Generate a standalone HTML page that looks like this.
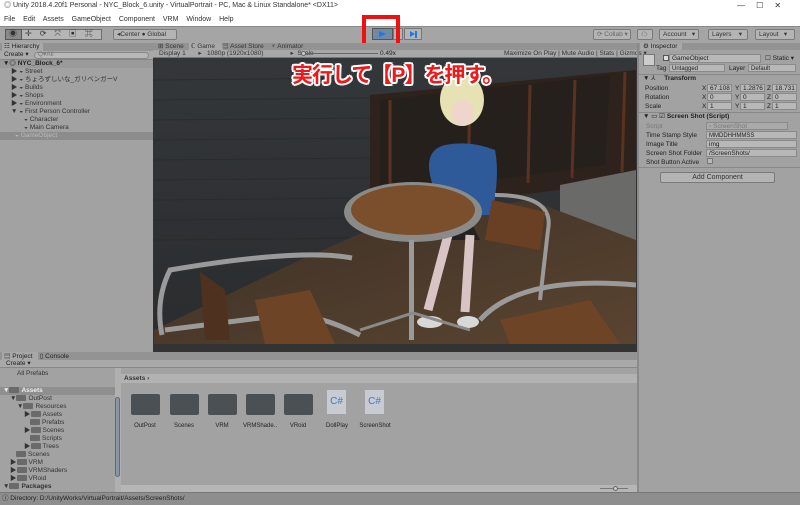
<!DOCTYPE html>
<html><head><meta charset="utf-8"><style>
*{margin:0;padding:0;box-sizing:border-box}
body{width:800px;height:505px;overflow:hidden;background:#a2a2a2;font-family:"Liberation Sans","Noto Sans CJK JP",sans-serif;font-size:7px;color:#222;position:relative}
.a{position:absolute}
.btn{position:absolute;background:#b4b4b4;border:1px solid #7a7a7a;border-radius:2px;font-size:6.5px;line-height:9px;padding-left:3px;color:#333}
.fld{position:absolute;background:#b8b8b8;border:1px solid #8a8a8a;font-size:6.5px;line-height:8px;padding-left:2px;color:#222}
.t{position:absolute;font-size:6.5px;line-height:8px;white-space:nowrap}
.fold{display:inline-block;width:10px;height:6px;background:#6a6a6a;border-radius:1px;vertical-align:middle;margin-right:2px}
.r{position:absolute;font-size:6.5px;line-height:8px;height:8px;white-space:nowrap;color:#333}
</style></head><body>
<div class="a" style="left:0;top:0;width:800px;height:26px;background:#fff"></div>
<div class="t" style="left:4px;top:2px;font-size:7px;color:#333">◎ Unity 2018.4.20f1 Personal - NYC_Block_6.unity - VirtualPortrait - PC, Mac &amp; Linux Standalone* &lt;DX11&gt;</div>
<div class="t" style="left:737px;top:2px;font-size:8px;color:#333">—&nbsp;&nbsp;&nbsp;&nbsp;&nbsp;☐&nbsp;&nbsp;&nbsp;&nbsp;&nbsp;✕</div>
<div class="t" style="left:4px;top:16px;font-size:7px;color:#333;word-spacing:2px">File&nbsp; Edit&nbsp; Assets&nbsp; GameObject&nbsp; Component&nbsp; VRM&nbsp; Window&nbsp; Help</div>
<div class="a" style="left:0;top:26px;width:800px;height:17px;background:#a5a5a5;border-top:1px solid #888"></div>
<div class="a" style="left:5px;top:29px;width:97px;height:11px;background:#b6b6b6;border:1px solid #6e6e6e"></div>
<div class="a" style="left:5px;top:29px;width:17px;height:11px;background:#8a8a8a;border:1px solid #555"></div>
<div class="t" style="left:9px;top:30px;font-size:8px;letter-spacing:8px;color:#333">◉✛⟳⤧▣⌘</div>
<div class="btn" style="left:113px;top:29px;width:64px;height:11px">◂Center ● Global</div>
<div class="a" style="left:372px;top:28px;width:21px;height:12px;background:#6f8aa6;border:1px solid #555"></div>
<div class="a" style="left:379px;top:31px;width:0;height:0;border-left:7px solid #1e78e8;border-top:3.5px solid transparent;border-bottom:3.5px solid transparent"></div>
<div class="a" style="left:393px;top:28px;width:10px;height:12px;background:#b4b4b4;border:1px solid #777"></div>
<div class="a" style="left:404px;top:28px;width:18px;height:12px;background:#b4b4b4;border:1px solid #777"></div>
<div class="a" style="left:410px;top:31px;width:0;height:0;border-left:5px solid #1e78e8;border-top:3.5px solid transparent;border-bottom:3.5px solid transparent"></div>
<div class="a" style="left:415px;top:31px;width:2px;height:7px;background:#1e78e8"></div>
<div class="a" style="left:362px;top:15px;width:38px;height:33px;border:4px solid #f01010"></div>
<div class="btn" style="left:593px;top:29px;width:38px;height:11px;color:#666">⟳ Collab ▾</div>
<div class="btn" style="left:637px;top:29px;width:16px;height:11px">☁</div>
<div class="btn" style="left:659px;top:29px;width:40px;height:11px">Account&nbsp;&nbsp;&nbsp;▾</div>
<div class="btn" style="left:708px;top:29px;width:40px;height:11px">Layers&nbsp;&nbsp;&nbsp;&nbsp;▾</div>
<div class="btn" style="left:755px;top:29px;width:40px;height:11px">Layout&nbsp;&nbsp;&nbsp;▾</div>
<!-- hierarchy -->
<div class="a" style="left:0;top:43px;width:153px;height:8px;background:#939393"></div>
<div class="a" style="left:2px;top:43px;width:41px;height:8px;background:#a8a8a8;border-radius:2px 2px 0 0"></div>
<div class="t" style="left:4px;top:43px">☷ Hierarchy</div>
<div class="a" style="left:0;top:51px;width:153px;height:9px;background:#a9a9a9;border-bottom:1px solid #888"></div>
<div class="t" style="left:4px;top:51px">Create ▾</div>
<div class="a" style="left:34px;top:52px;width:115px;height:7px;background:#b8b8b8;border:1px solid #888;border-radius:4px"></div>
<div class="t" style="left:38px;top:51px;color:#777">Q▾All</div>
<div class="a" style="left:0;top:60px;width:153px;height:292px;background:#a2a2a2"></div>
<div class="a" style="left:0;top:60px;width:153px;height:8px;background:#9a9a9a"></div>
<div class="t" style="left:3px;top:60px;font-weight:bold">▼◎ NYC_Block_6*</div>
<div class="t" style="left:11px;top:68px;color:#333;line-height:8px">▶ ◒ Street<br>▶ ◒ ちょろずしいな_ガリベンガーV<br>▶ ◒ Builds<br>▶ ◒ Shops<br>▶ ◒ Environment<br>▼ ◒ First Person Controller</div>
<div class="t" style="left:24px;top:116px;color:#333;line-height:8px">◒ Character<br>◒ Main Camera</div>
<div class="a" style="left:0;top:132px;width:153px;height:8px;background:#8c8c8c"></div>
<div class="t" style="left:15px;top:132px;color:#bbb">◒ GameObject</div>
<!-- game view -->
<div class="a" style="left:153px;top:43px;width:484px;height:309px;background:#333"></div>
<div class="a" style="left:153px;top:43px;width:484px;height:7px;background:#939393"></div>
<div class="a" style="left:189px;top:43px;width:34px;height:7px;background:#a8a8a8"></div>
<div class="t" style="left:158px;top:43px;line-height:7px;color:#333">⊞ Scene&nbsp;&nbsp;&nbsp;&nbsp;ℂ Game&nbsp;&nbsp;&nbsp;&nbsp;▤ Asset Store&nbsp;&nbsp;&nbsp;&nbsp;♆ Animator</div>
<div class="a" style="left:153px;top:50px;width:484px;height:8px;background:#a8a8a8;border-bottom:1px solid #777"></div>
<div class="t" style="left:159px;top:50px;color:#333">Display 1&nbsp;&nbsp;&nbsp;&nbsp;&nbsp;&nbsp;&nbsp;▸&nbsp;&nbsp;&nbsp;1080p (1920x1080)&nbsp;&nbsp;&nbsp;&nbsp;&nbsp;&nbsp;&nbsp;&nbsp;&nbsp;&nbsp;&nbsp;&nbsp;&nbsp;&nbsp;&nbsp;▸&nbsp; Scale</div>
<div class="a" style="left:303px;top:53px;width:75px;height:1px;background:#666"></div>
<div class="a" style="left:301px;top:51px;width:5px;height:5px;border-radius:50%;background:#ccc;border:1px solid #666"></div>
<div class="t" style="left:380px;top:50px">0.49x</div>
<div class="t" style="left:504px;top:50px;color:#333">Maximize On Play | Mute Audio | Stats | Gizmos ▾</div>
<svg class="a" style="left:154px;top:58px" width="482" height="286" viewBox="154 58 482 286">
<defs><linearGradient id="w" x1="0" y1="0" x2="0" y2="1"><stop offset="0" stop-color="#34373a"/><stop offset="1" stop-color="#2a2c2e"/></linearGradient>
<linearGradient id="fl" x1="0" y1="0" x2="1" y2="1"><stop offset="0" stop-color="#3c3026"/><stop offset="1" stop-color="#5a4430"/></linearGradient></defs>
<rect x="154" y="58" width="482" height="286" fill="url(#w)"/>
<g stroke="#27292b" stroke-width="1" opacity=".7">
<line x1="154" y1="80" x2="370" y2="78"/><line x1="154" y1="100" x2="370" y2="98"/><line x1="154" y1="120" x2="370" y2="118"/><line x1="154" y1="140" x2="370" y2="138"/><line x1="154" y1="160" x2="370" y2="158"/><line x1="154" y1="180" x2="370" y2="178"/><line x1="154" y1="200" x2="370" y2="198"/><line x1="154" y1="220" x2="370" y2="218"/><line x1="154" y1="240" x2="370" y2="238"/></g>
<polygon points="370,95 636,70 636,180 520,195 370,210" fill="#2e221c"/>
<polygon points="380,100 610,75 605,165 380,195" fill="#26201d"/>
<g stroke="#5a3220" stroke-width="3"><line x1="390" y1="100" x2="390" y2="200"/><line x1="470" y1="92" x2="468" y2="190"/><line x1="530" y1="85" x2="528" y2="183"/><line x1="575" y1="80" x2="572" y2="178"/><line x1="625" y1="72" x2="622" y2="172"/></g>
<polygon points="560,185 636,170 636,255 560,230" fill="#6a6a68"/>
<polygon points="154,330 300,260 380,225 530,200 636,240 636,344 154,344" fill="url(#fl)"/>
<!-- character -->
<path d="M430 175 Q425 150 445 145 Q470 140 495 150 Q500 175 492 215 L440 215 Z" fill="#2f5a9a"/>
<path d="M445 215 L470 220 L480 240 L445 240 Z" fill="#222"/>
<path d="M448 235 L428 310 M470 235 L465 312" stroke="#d8c4c4" stroke-width="9"/>
<ellipse cx="462" cy="100" rx="22" ry="26" fill="#e6e2b4"/>
<ellipse cx="463" cy="113" rx="11" ry="13" fill="#efd6cc"/>
<ellipse cx="430" cy="322" rx="13" ry="6" fill="#d8d8d8"/>
<ellipse cx="468" cy="322" rx="11" ry="6" fill="#d8d8d8"/>
<!-- table -->
<ellipse cx="413" cy="212" rx="69" ry="30" fill="#8a8a88"/>
<ellipse cx="413" cy="210" rx="62" ry="25" fill="#7b4e2c"/>
<rect x="409" y="240" width="5" height="100" fill="#9a9a98"/>
<path d="M360 330 L413 313 L470 330" stroke="#8a8a88" stroke-width="3" fill="none"/>
<path d="M352 258 Q300 248 170 270 Q155 300 162 335 M165 330 L260 318 Q300 305 360 335" stroke="#9a9a9a" stroke-width="5" fill="none"/>
<polygon points="200,272 225,290 230,340 205,340" fill="#4e321f"/>
<polygon points="255,300 310,290 335,344 265,344" fill="#6e4426"/>
<path d="M495 195 Q555 195 548 230 L540 300" stroke="#9a9a9a" stroke-width="4" fill="none"/>
<polygon points="492,200 545,212 540,250 485,240" fill="#6a4024"/>
<path d="M480 320 Q520 275 636 285" stroke="#9a9a9a" stroke-width="5" fill="none"/>
<polygon points="500,320 590,300 620,344 510,344" fill="#6e4426"/>
</svg>
<div class="t" style="left:292px;top:63px;font-size:21px;line-height:26px;font-weight:bold;color:#f01818;letter-spacing:-1px;text-shadow:2px 0 #fff,-2px 0 #fff,0 2px #fff,0 -2px #fff,1.5px 1.5px #fff,-1.5px -1.5px #fff,1.5px -1.5px #fff,-1.5px 1.5px #fff">実行して【P】を押す。</div>
<!-- inspector -->
<div class="a" style="left:637px;top:43px;width:2px;height:450px;background:#8a8a8a"></div>
<div class="a" style="left:639px;top:43px;width:161px;height:7px;background:#939393"></div>
<div class="a" style="left:640px;top:43px;width:42px;height:7px;background:#a8a8a8"></div>
<div class="t" style="left:643px;top:43px;line-height:7px">⚙ Inspector</div>
<div class="a" style="left:643px;top:54px;width:12px;height:12px;background:#ccc;border:1px solid #777"></div>
<div class="a" style="left:663px;top:55px;width:6px;height:6px;background:#ddd;border:1px solid #555"></div>
<div class="fld" style="left:669px;top:54px;width:92px;height:9px">GameObject</div>
<div class="t" style="left:765px;top:55px">☐ Static ▾</div>
<div class="t" style="left:656px;top:65px">Tag</div>
<div class="fld" style="left:669px;top:64px;width:56px;height:8px;font-size:6px">Untagged</div>
<div class="t" style="left:729px;top:65px">Layer</div>
<div class="fld" style="left:748px;top:64px;width:48px;height:8px;font-size:6px">Default</div>
<div class="a" style="left:639px;top:74px;width:161px;height:1px;background:#888"></div>
<div class="t" style="left:643px;top:75px">▼ ⅄&nbsp;&nbsp;&nbsp;&nbsp;&nbsp;<b>Transform</b></div>
<div class="t" style="left:645px;top:84px;line-height:9px">Position<br>Rotation<br>Scale</div>
<div class="t" style="left:702px;top:84px;line-height:9px">X<br>X<br>X</div>
<div class="t" style="left:735px;top:84px;line-height:9px">Y<br>Y<br>Y</div>
<div class="t" style="left:767px;top:84px;line-height:9px">Z<br>Z<br>Z</div>
<div class="fld" style="left:707px;top:84px;width:25px;height:8px">67.108</div><div class="fld" style="left:740px;top:84px;width:25px;height:8px">1.2876</div><div class="fld" style="left:772px;top:84px;width:25px;height:8px">18.731</div>
<div class="fld" style="left:707px;top:93px;width:25px;height:8px">0</div><div class="fld" style="left:740px;top:93px;width:25px;height:8px">0</div><div class="fld" style="left:772px;top:93px;width:25px;height:8px">0</div>
<div class="fld" style="left:707px;top:102px;width:25px;height:8px">1</div><div class="fld" style="left:740px;top:102px;width:25px;height:8px">1</div><div class="fld" style="left:772px;top:102px;width:25px;height:8px">1</div>
<div class="a" style="left:639px;top:112px;width:161px;height:1px;background:#888"></div>
<div class="t" style="left:643px;top:113px">▼ ▭ ☑ <b>Screen Shot (Script)</b></div>
<div class="t" style="left:646px;top:122px;line-height:9px"><span style="color:#777">Script</span><br>Time Stamp Style<br>Image Title<br>Screen Shot Folder<br>Shot Button Active</div>
<div class="fld" style="left:706px;top:122px;width:82px;height:8px;color:#777;background:#aaa">▫ ScreenShot</div>
<div class="fld" style="left:706px;top:131px;width:91px;height:8px;font-size:6px">MMDDHHMMSS</div>
<div class="fld" style="left:706px;top:140px;width:91px;height:8px">img</div>
<div class="fld" style="left:706px;top:149px;width:91px;height:8px">/ScreenShots/</div>
<div class="a" style="left:707px;top:158px;width:6px;height:6px;border:1px solid #777;background:#b8b8b8"></div>
<div class="a" style="left:639px;top:167px;width:161px;height:1px;background:#888"></div>
<div class="btn" style="left:660px;top:172px;width:115px;height:11px;text-align:center;padding:0;font-size:7px;line-height:10px">Add Component</div>
<!-- project -->
<div class="a" style="left:0;top:352px;width:637px;height:8px;background:#939393"></div>
<div class="a" style="left:2px;top:352px;width:36px;height:8px;background:#a8a8a8"></div>
<div class="t" style="left:4px;top:353px;line-height:7px">▤ Project&nbsp;&nbsp;&nbsp;&nbsp;▯ Console</div>
<div class="a" style="left:0;top:360px;width:637px;height:8px;background:#a9a9a9;border-bottom:1px solid #888"></div>
<div class="t" style="left:6px;top:360px;line-height:8px">Create ▾</div>
<div class="a" style="left:0;top:368px;width:115px;height:124px;background:#a2a2a2"></div>
<div class="t" style="left:17px;top:370px;color:#333">All Prefabs</div>
<div class="a" style="left:0;top:387px;width:115px;height:8px;background:#8f8f8f"></div>
<div class="r" style="left:3px;top:387px;color:#eee;font-weight:bold">▼<span class="fold"></span>Assets</div>
<div class="r" style="left:10px;top:395px">▼<span class="fold"></span>OutPost</div>
<div class="r" style="left:17px;top:403px">▼<span class="fold"></span>Resources</div>
<div class="r" style="left:24px;top:411px">▶<span class="fold"></span>Assets</div>
<div class="r" style="left:30px;top:419px"><span class="fold"></span>Prefabs</div>
<div class="r" style="left:24px;top:427px">▶<span class="fold"></span>Scenes</div>
<div class="r" style="left:30px;top:435px"><span class="fold"></span>Scripts</div>
<div class="r" style="left:24px;top:443px">▶<span class="fold"></span>Trees</div>
<div class="r" style="left:16px;top:451px"><span class="fold"></span>Scenes</div>
<div class="r" style="left:10px;top:459px">▶<span class="fold"></span>VRM</div>
<div class="r" style="left:10px;top:467px">▶<span class="fold"></span>VRMShaders</div>
<div class="r" style="left:10px;top:475px">▶<span class="fold"></span>VRoid</div>
<div class="r" style="left:3px;top:483px;font-weight:bold">▼<span class="fold"></span>Packages</div>
<div class="a" style="left:115px;top:368px;width:6px;height:124px;background:#b0b0b0"></div>
<div class="a" style="left:115px;top:397px;width:5px;height:80px;background:#8a96a6;border:1px solid #667;border-radius:3px"></div>
<div class="a" style="left:121px;top:368px;width:516px;height:124px;background:#a2a2a2"></div>
<div class="a" style="left:121px;top:374px;width:516px;height:9px;background:#b2b2b2"></div>
<div class="t" style="left:124px;top:375px;font-weight:bold;color:#333">Assets ›</div>
<div class="a" style="left:121px;top:485px;width:516px;height:7px;background:#b6b6b6"></div>
<div class="a" style="left:600px;top:488px;width:28px;height:1px;background:#777"></div>
<div class="a" style="left:613px;top:486px;width:5px;height:5px;border-radius:50%;background:#ccc;border:1px solid #666"></div>
<div class="a" style="left:131px;top:394px;width:29px;height:21px;background:#4a5054;border-radius:2px"></div>
<div class="a" style="left:170px;top:394px;width:29px;height:21px;background:#4a5054;border-radius:2px"></div>
<div class="a" style="left:208px;top:394px;width:29px;height:21px;background:#4a5054;border-radius:2px"></div>
<div class="a" style="left:246px;top:394px;width:29px;height:21px;background:#4a5054;border-radius:2px"></div>
<div class="a" style="left:284px;top:394px;width:29px;height:21px;background:#4a5054;border-radius:2px"></div>
<div class="a" style="left:327px;top:390px;width:19px;height:24px;background:#c8ccd2;font-size:10px;color:#3a7acb;text-align:center;line-height:24px">C#</div>
<div class="a" style="left:365px;top:390px;width:19px;height:24px;background:#c8ccd2;font-size:10px;color:#3a7acb;text-align:center;line-height:24px">C#</div>
<div class="t" style="left:125px;top:422px;font-size:6px;width:40px;text-align:center">OutPost</div>
<div class="t" style="left:164px;top:422px;font-size:6px;width:40px;text-align:center">Scenes</div>
<div class="t" style="left:202px;top:422px;font-size:6px;width:40px;text-align:center">VRM</div>
<div class="t" style="left:240px;top:422px;font-size:6px;width:40px;text-align:center">VRMShade..</div>
<div class="t" style="left:278px;top:422px;font-size:6px;width:40px;text-align:center">VRoid</div>
<div class="t" style="left:317px;top:422px;font-size:6px;width:40px;text-align:center">DollPlay</div>
<div class="t" style="left:355px;top:422px;font-size:6px;width:40px;text-align:center">ScreenShot</div>
<div class="a" style="left:0;top:492px;width:800px;height:13px;background:#8e8e8e;border-top:1px solid #777"></div>
<div class="t" style="left:2px;top:495px;color:#222">ⓘ Directory: D:/UnityWorks/VirtualPortrait/Assets/ScreenShots/</div>
</body></html>
